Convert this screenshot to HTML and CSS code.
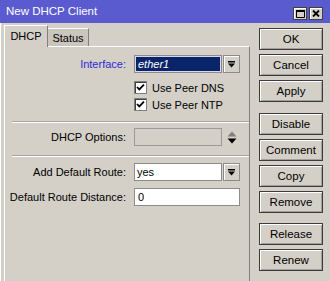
FILE: index.html
```html
<!DOCTYPE html>
<html>
<head>
<meta charset="utf-8">
<link rel="stylesheet" href="styles.css">
</head>
<body>
<div class="window">
  <div class="titlebar">
    <span class="title">New DHCP Client</span>
    <div class="tbtns">
      <span class="tbtn"><svg width="9" height="8" viewBox="0 0 9 8"><path d="M0.5 0.5h8v7h-8z" fill="none" stroke="#000"/><rect x="0" y="0" width="9" height="2" fill="#000"/></svg></span>
      <span class="tbtn"><svg width="8" height="7" viewBox="0 0 8 7"><path d="M1 0.5l6 6M7 0.5l-6 6" stroke="#000" stroke-width="1.8"/></svg></span>
    </div>
  </div>
  <div class="body">
    <div class="main">
      <div class="tabs">
        <div class="tab active">DHCP</div>
        <div class="tab">Status</div>
      </div>
      <div class="panel">
        <div class="row">
          <span class="label blue">Interface:</span>
          <span class="field sel">ether1</span>
          <span class="ddbtn"><svg width="9" height="9" viewBox="0 0 9 9"><rect x="1" y="1" width="7" height="1.5" fill="#000"/><path d="M1 3.5h7l-3.5 4z" fill="#000"/></svg></span>
        </div>
        <div class="crow first">
          <span class="check"><svg width="11" height="11" viewBox="0 0 11 11"><path d="M2 5l2.3 2.4L9 2.6" fill="none" stroke="#000" stroke-width="1.8"/></svg></span>
          <span class="ctext">Use Peer DNS</span>
        </div>
        <div class="crow">
          <span class="check"><svg width="11" height="11" viewBox="0 0 11 11"><path d="M2 5l2.3 2.4L9 2.6" fill="none" stroke="#000" stroke-width="1.8"/></svg></span>
          <span class="ctext">Use Peer NTP</span>
        </div>
        <div class="sep s1"></div>
        <div class="row r-opts">
          <span class="label">DHCP Options:</span>
          <span class="field disabled"></span>
          <span class="updown"><svg width="10" height="13" viewBox="0 0 10 13"><path d="M0.5 5.5l4.5-5 4.5 5z" fill="#808080"/><path d="M0.5 7.5h9l-4.5 5z" fill="#000"/></svg></span>
        </div>
        <div class="sep s2"></div>
        <div class="row r-route">
          <span class="label">Add Default Route:</span>
          <span class="field">yes</span>
          <span class="ddbtn"><svg width="9" height="9" viewBox="0 0 9 9"><rect x="1" y="1" width="7" height="1.5" fill="#000"/><path d="M1 3.5h7l-3.5 4z" fill="#000"/></svg></span>
        </div>
        <div class="row r-dist">
          <span class="label">Default Route Distance:</span>
          <span class="field wide">0</span>
        </div>
      </div>
    </div>
    <div class="buttons">
      <div class="btn">OK</div>
      <div class="btn">Cancel</div>
      <div class="btn">Apply</div>
      <div class="btn g1">Disable</div>
      <div class="btn">Comment</div>
      <div class="btn">Copy</div>
      <div class="btn">Remove</div>
      <div class="btn g2">Release</div>
      <div class="btn">Renew</div>
    </div>
  </div>
</div>
</body>
</html>
```
FILE: styles.css
```css
* { box-sizing: border-box; }
body {
  margin: 0;
  font-family: "Liberation Sans", Arial, sans-serif;
  font-size: 11px;
  color: #000;
  background: #d4d0c8;
}
.window {
  width: 330px;
  height: 281px;
  overflow: hidden;
  display: flex;
  flex-direction: column;
  background: #d4d0c8;
}
.titlebar {
  height: 23px;
  flex: none;
  background: #5b5bd0;
  display: flex;
  align-items: flex-start;
  padding: 0 7px 0 6px;
  color: #fff;
}
.title {
  flex: 1;
  padding-top: 5px;
  font-size: 11.5px;
}
.tbtns {
  display: flex;
  gap: 2px;
  margin-top: 7px;
}
.tbtn {
  width: 14px;
  height: 13px;
  background: #d4d0c8;
  border: 1px solid #404040;
  box-shadow: inset 1px 1px #fff;
  display: flex;
  align-items: center;
  justify-content: center;
}
.body {
  flex: 1;
  min-height: 0;
  display: flex;
  border-left: 1px solid #fff;
  padding-left: 3px;
  gap: 9px;
}
.main {
  width: 246px;
  display: flex;
  flex-direction: column;
  padding-top: 2px;
}
.tabs {
  display: flex;
  align-items: flex-end;
  height: 21px;
  flex: none;
}
.tab {
  height: 18px;
  width: 41px;
  border-top: 1px solid #fff;
  border-right: 1px solid #808080;
  background: #cac6be;
  display: flex;
  align-items: center;
  justify-content: center;
  padding-top: 1px;
}
.tab.active {
  height: 22px;
  width: 44px;
  margin-bottom: -1px;
  position: relative;
  z-index: 1;
  border-left: 1px solid #fff;
  background: #d4d0c8;
  padding-top: 0;
  padding-bottom: 2px;
}
.panel {
  flex: 1;
  border-left: 1px solid #fff;
  border-top: 1px solid #fff;
  border-right: 1px solid #808080;
  padding-top: 8px;
}
.row {
  display: flex;
  align-items: center;
  height: 18px;
}
.label {
  width: 121px;
  margin-right: 8px;
  text-align: right;
  white-space: nowrap;
}
.label.blue { color: #2b2bd2; }
.field {
  width: 88px;
  height: 18px;
  border: 1px solid #8c8c8c;
  background: #fff;
  padding-left: 2px;
  display: flex;
  align-items: center;
}
.field.wide { width: 106px; padding-left: 3px; }
.field.sel {
  background: #0a246a;
  color: #fff;
  font-style: italic;
  box-shadow: inset 0 0 0 1px #d8d8e8;
  padding-left: 3px;
}
.field.disabled {
  background: #d4d0c8;
  border-color: #9a9a9a;
}
.ddbtn {
  width: 17px;
  height: 18px;
  margin-left: 1px;
  border: 1px solid #8c8c8c;
  box-shadow: inset 1px 1px #fff;
  background: #d4d0c8;
  display: flex;
  align-items: center;
  justify-content: center;
}
.updown {
  margin-left: 5px;
  display: flex;
}
.crow {
  display: flex;
  align-items: center;
  height: 17px;
  padding-left: 129px;
}
.crow.first { margin-top: 6px; }
.check {
  width: 13px;
  height: 13px;
  border: 1px solid #808080;
  box-shadow: inset 1px 1px #404040;
  background: #fff;
  display: flex;
  align-items: center;
  justify-content: center;
}
.ctext { margin-left: 5px; }
.sep {
  height: 2px;
  margin-left: 7px;
  border-top: 1px solid #a8a49c;
  border-bottom: 1px solid #fff;
}
.sep.s1 { margin-top: 8px; }
.r-opts { margin-top: 5px; }
.sep.s2 { margin-top: 9px; }
.r-route { margin-top: 6px; }
.r-dist { margin-top: 7px; }
.buttons {
  width: 64px;
  display: flex;
  flex-direction: column;
  gap: 4px;
  padding-top: 5px;
}
.btn {
  height: 22px;
  flex: none;
  border: 1px solid #3c3c3c;
  box-shadow: inset 1px 1px #fff, inset -1px -1px #a0a0a0;
  background: #d4d0c8;
  display: flex;
  align-items: center;
  justify-content: center;
  font-size: 11.5px;
}
.btn.g1 { margin-top: 7px; }
.btn.g2 { margin-top: 6px; }
```
